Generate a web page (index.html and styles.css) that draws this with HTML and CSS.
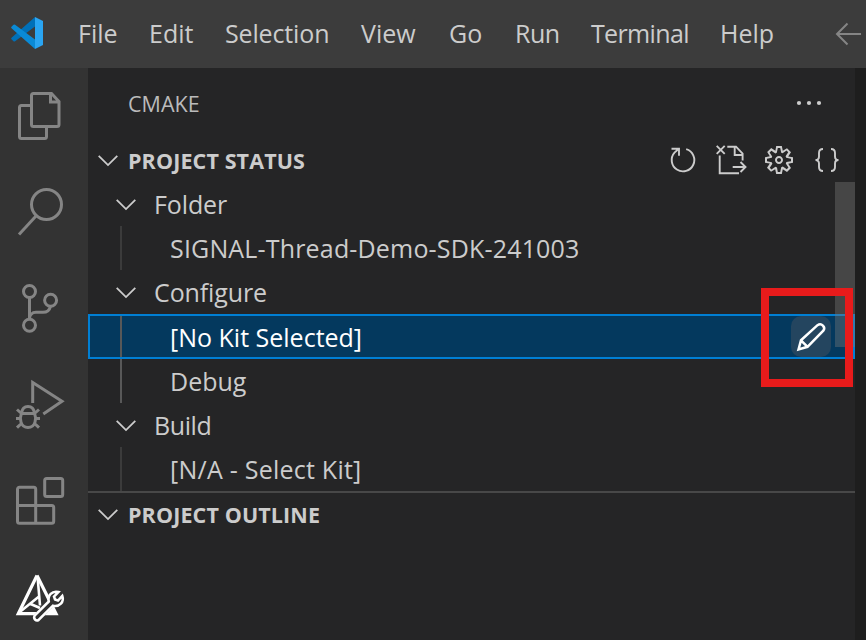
FILE: index.html
```html
<!DOCTYPE html>
<html lang="en">
<head>
<meta charset="utf-8">
<title>CMake - Visual Studio Code</title>
<link rel="stylesheet" href="styles.css">
</head>
<body>
<div class="window">
  <header class="titlebar">
    <svg class="logo" viewBox="0 0 34 34" width="34" height="34">
      <path fill="#0070b8" d="M25 1 1.500 21.800a1 1 0 0 0 0 1.500l2 1.900a1.200 1.200 0 0 0 1.600.1L25 10.500z"/>
      <path fill="#0a8ad6" d="M25 33 1.500 12.200a1 1 0 0 1 0-1.500l2-1.900a1.200 1.200 0 0 1 1.600-.1L25 23.500z"/>
      <path fill="#2aa5f2" d="M25 1 33 4.900V29.100L25 33z"/>
    </svg>
    <nav class="menu">
      <span>File</span><span>Edit</span><span class="m-selection">Selection</span><span>View</span><span>Go</span><span class="m-run">Run</span><span class="m-terminal">Terminal</span><span>Help</span>
    </nav>
    <svg class="back" viewBox="0 0 32 32" width="32" height="32"><path d="M30 16H6M16.500 5.500 6 16l10.500 10.500"/></svg>
  </header>
  <div class="body">
    <aside class="activity">
      <svg viewBox="0 0 48 48"><path d="M15.500 3.500a2 2 0 0 1 2-2H35.500L43 9.500V32.500a2 2 0 0 1-2 2H17.500a2 2 0 0 1-2-2zM34.500 1.500V10H43M15.500 13.500H5.500a2 2 0 0 0-2 2V44.500a2 2 0 0 0 2 2H28.500a2 2 0 0 0 2-2V35"/></svg>
      <svg viewBox="0 0 48 48"><circle cx="30.500" cy="16.500" r="15"/><path d="M20 28 3 46.500"/></svg>
      <svg viewBox="0 0 48 48"><circle cx="13.500" cy="7.500" r="6"/><circle cx="34.600" cy="16.300" r="6"/><circle cx="13.500" cy="41.300" r="6"/><path d="M13.500 13.500V35.300C13.500 31 16 28.300 20 28.300H27Q33 28.300 34.500 22.300"/></svg>
      <svg viewBox="0 0 48 48"><path d="M16.700 23V2.500L46 21.300 27.300 34"/><path d="M12 26.500c4 0 6 3 6.500 6.500 2 5 1.500 14.500-6.500 14.500S3.500 38 5.500 33c.5-3.500 2.500-6.500 6.500-6.500zM5 33.500H19M5.500 33.500 1 29.500M18.500 33.500 23 29.500M4 38.500H0M20 38.500H24M6 43 1 47.700M18 43 23 47.700"/></svg>
      <svg viewBox="0 0 48 48"><path d="M1.500 13.300a2 2 0 0 1 2-2H17.700a2 2 0 0 1 2 2V47.300H3.500a2 2 0 0 1-2-2zM1.500 29.500H35.700a2 2 0 0 1 2 2V45.300a2 2 0 0 1-2 2H19"/><rect x="28.700" y="2.500" width="18" height="18" rx="2"/></svg>
      <svg class="active" viewBox="0 0 48 48"><path d="M21 3.500 2.300 41.700H40L21 3.500"/><path class="inner" d="M21.500 4 24 33.500M2.500 41 23 24.500M13.500 31.500 24 36"/><path class="fill" d="M30 38.500 36 36.500 41 42H27z"/><path class="knock" d="M21 45.500 34.500 31.500"/><path class="wrench" d="M18.600 43.700 32.800 29.500C31.500 23.500 36 18.300 42.500 20L38 24.500 39 27.500 42 28.500 46.300 23.800C48.500 30 43.500 35 37 33.700L22.600 48Q20.500 49 19 47.500T18.600 43.700z"/></svg>
    </aside>
    <main class="sidebar">
      <div class="view-title"><span>CMAKE</span>
        <svg class="dots" viewBox="0 0 32 32" width="32" height="32"><circle cx="6" cy="16" r="2.100"/><circle cx="16" cy="16" r="2.100"/><circle cx="26" cy="16" r="2.100"/></svg>
      </div>
      <div class="section-head">
        <svg class="chev" viewBox="0 0 20 12"><path d="M.700 .800 10 10.100 19.300 .800"/></svg>
        <h2>PROJECT STATUS</h2>
        <div class="actions">
          <svg viewBox="0 0 32 32"><path d="M19.200 5.200A11.300 11.300 0 1 1 7.500 8.600L11.800 4.800M4.500 4.700H12V11.800"/></svg>
          <svg viewBox="0 0 32 32"><path d="M1.700 1.900 9.700 9.900M9.700 1.900 1.700 9.900M4.700 11.500V29.200H24M12.300 2.700H21L27.600 9.700V16.500M19.700 3V11H27.500M17.700 23H30.500M25.500 18 30.500 23 25.500 28"/></svg>
          <svg class="solid" viewBox="0 0 16 16"><path d="M9.1 4.400L8.600 2H7.400l-.5 2.400-.7.3-2-1.300-.9.8 1.300 2-.2.7-2.400.5v1.200l2.400.5.3.8-1.300 2 .8.8 2-1.300.8.3.4 2.300h1.200l.5-2.400.8-.3 2 1.300.8-.8-1.300-2 .3-.8 2.300-.4V7.400l-2.400-.5-.3-.8 1.300-2-.8-.8-2 1.300-.7-.2zM9.400 1l.5 2.400L12 2.100l2 2-1.400 2.100 2.400.4v2.800l-2.400.5L14 12l-2 2-2.100-1.400-.5 2.400H6.600l-.5-2.400L4 13.900l-2-2 1.400-2.100L1 9.400V6.600l2.400-.5L2.100 4l2-2 2.100 1.400.4-2.400h2.800zm.6 7c0 1.100-.9 2-2 2s-2-.9-2-2 .9-2 2-2 2 .9 2 2zM8 9c.6 0 1-.4 1-1s-.4-1-1-1-1 .4-1 1 .4 1 1 1z"/></svg>
          <svg viewBox="0 0 32 32"><path d="M12 5Q8 5 8 9V12.500Q8 16 4.500 16 8 16 8 19.500V23Q8 27 12 27M20 5Q24 5 24 9V12.500Q24 16 27.500 16 24 16 24 19.500V23Q24 27 20 27"/></svg>
        </div>
      </div>
      <div class="tree">
        <div class="row group"><svg class="chev" viewBox="0 0 20 12"><path d="M.700 .800 10 10.100 19.300 .800"/></svg><span class="t-folder">Folder</span></div>
        <div class="row leaf"><span class="t-signal">SIGNAL-Thread-Demo-SDK-241003</span></div>
        <div class="row group"><svg class="chev" viewBox="0 0 20 12"><path d="M.700 .800 10 10.100 19.300 .800"/></svg><span class="t-configure">Configure</span></div>
        <div class="row leaf on selected"><span class="t-kit">[No Kit Selected]</span>
          <button class="edit" aria-label="Select a Kit"><svg viewBox="0 0 32 32" width="32" height="32"><path d="M3.500 28.500 6 19.300 22.500 4.200C26.500 1.500 31 6 28.300 9.700L12.500 25.800zM6 19.300 12.500 25.800"/></svg></button>
        </div>
        <div class="row leaf on"><span>Debug</span></div>
        <div class="row group"><svg class="chev" viewBox="0 0 20 12"><path d="M.700 .800 10 10.100 19.300 .800"/></svg><span class="t-build">Build</span></div>
        <div class="row leaf"><span class="t-na">[N/A - Select Kit]</span></div>
        <div class="scrollbar"></div>
      </div>
      <div class="section-head outline">
        <svg class="chev" viewBox="0 0 20 12"><path d="M.700 .800 10 10.100 19.300 .800"/></svg>
        <h2>PROJECT OUTLINE</h2>
      </div>
    </main>
    <div class="editor"></div>
  </div>
  <div class="highlight"></div>
</div>
</body>
</html>
```
FILE: styles.css
```css
* { box-sizing: border-box; }
body { margin: 0; }
.window {
  position: relative;
  width: 866px;
  height: 640px;
  overflow: hidden;
  display: flex;
  flex-direction: column;
  background: #1e1e1e;
  color: #cccccc;
  font: 25px/44px "Open Sans", "Noto Sans", sans-serif;
  white-space: nowrap;
}
svg { display: block; flex: none; fill: none; stroke: currentColor; overflow: visible; }

.titlebar { display: flex; align-items: center; height: 68px; flex: none; background: #3c3c3c; padding-left: 10px; }
.logo { stroke: none; margin-top: -2px; }
.menu { display: grid; grid-template-columns: 71px 76px 136px 88px 66px 76px 129px 109px; margin: -2px 0 0 34px; width: 751px; }
.m-selection { letter-spacing: -0.15px; }
.m-run { letter-spacing: -0.5px; }
.m-terminal { letter-spacing: -0.65px; }
.back { color: #858585; stroke-width: 2; margin-left: 2px; }

.body { display: flex; flex: 1; min-height: 0; }
.activity { width: 88px; background: #333333; color: #858585; display: flex; flex-direction: column; gap: 48px; padding: 24px 0 0 16px; }
.activity svg { width: 48px; height: 48px; stroke-width: 3; }
.activity .active { color: #ffffff; stroke-width: 3.2; }
.activity .inner { stroke-width: 2.6; }
.activity .fill { fill: #ffffff; stroke: none; }
.activity .knock { stroke: #333333; stroke-width: 8; }
.activity .wrench { fill: #333333; stroke-width: 2.5; }

.sidebar { width: 767px; background: #252526; display: flex; flex-direction: column; }
.view-title { height: 71px; display: flex; align-items: center; justify-content: space-between; padding: 0 30px 0 40px; font-size: 21.5px; color: #bbbbbb; }
.dots { fill: #cccccc; stroke: none; margin-top: -2px; }
.section-head { display: flex; align-items: center; height: 43px; padding-left: 10px; }
.section-head h2 { margin: 0 0 0 10px; font-size: 21.5px; font-weight: 700; letter-spacing: 0.12px; }
.chev { width: 20px; height: 12px; stroke-width: 1.8; }
.actions { display: flex; gap: 16px; margin: -2px 0 0 auto; padding-right: 12px; stroke-width: 1.9; }
.actions svg { width: 32px; height: 32px; }
.actions .solid { fill: currentColor; stroke: none; }

.tree { position: relative; height: 309px; }
.row { display: flex; align-items: center; height: 44px; }
.group { padding-left: 28px; gap: 18px; }
.group .chev { margin-top: 2px; }
.leaf { padding-left: 32px; }
.leaf::before { content: ""; width: 2px; height: 100%; margin-right: 48px; background: #3b3b3b; }
.leaf.on::before { background: #585858; }
.t-folder, .t-configure { letter-spacing: -0.12px; }
.t-signal { letter-spacing: 0.17px; }
.t-build { letter-spacing: -0.4px; }
.t-na { letter-spacing: 0.24px; }
.selected { height: 45px; background: #04395e; color: #ffffff; outline: 2px solid #007fd4; outline-offset: -2px; }
.edit { width: 40px; height: 41px; border: 0; border-radius: 10px; margin-left: auto; margin-right: 24px; padding: 4px; background: #24455f; color: #ffffff; }
.edit svg { stroke-width: 2.5; }
.scrollbar { position: absolute; right: 0; top: 0; width: 20px; height: 165px; background: rgba(121, 121, 121, 0.4); }
.outline { border-top: 2px solid #484848; height: 46px; }
.editor { flex: 1; background: #1e1e1e; }
.highlight { position: absolute; left: 761px; top: 287.500px; width: 91.500px; height: 99.500px; border: 8px solid #e81b1b; }
```
